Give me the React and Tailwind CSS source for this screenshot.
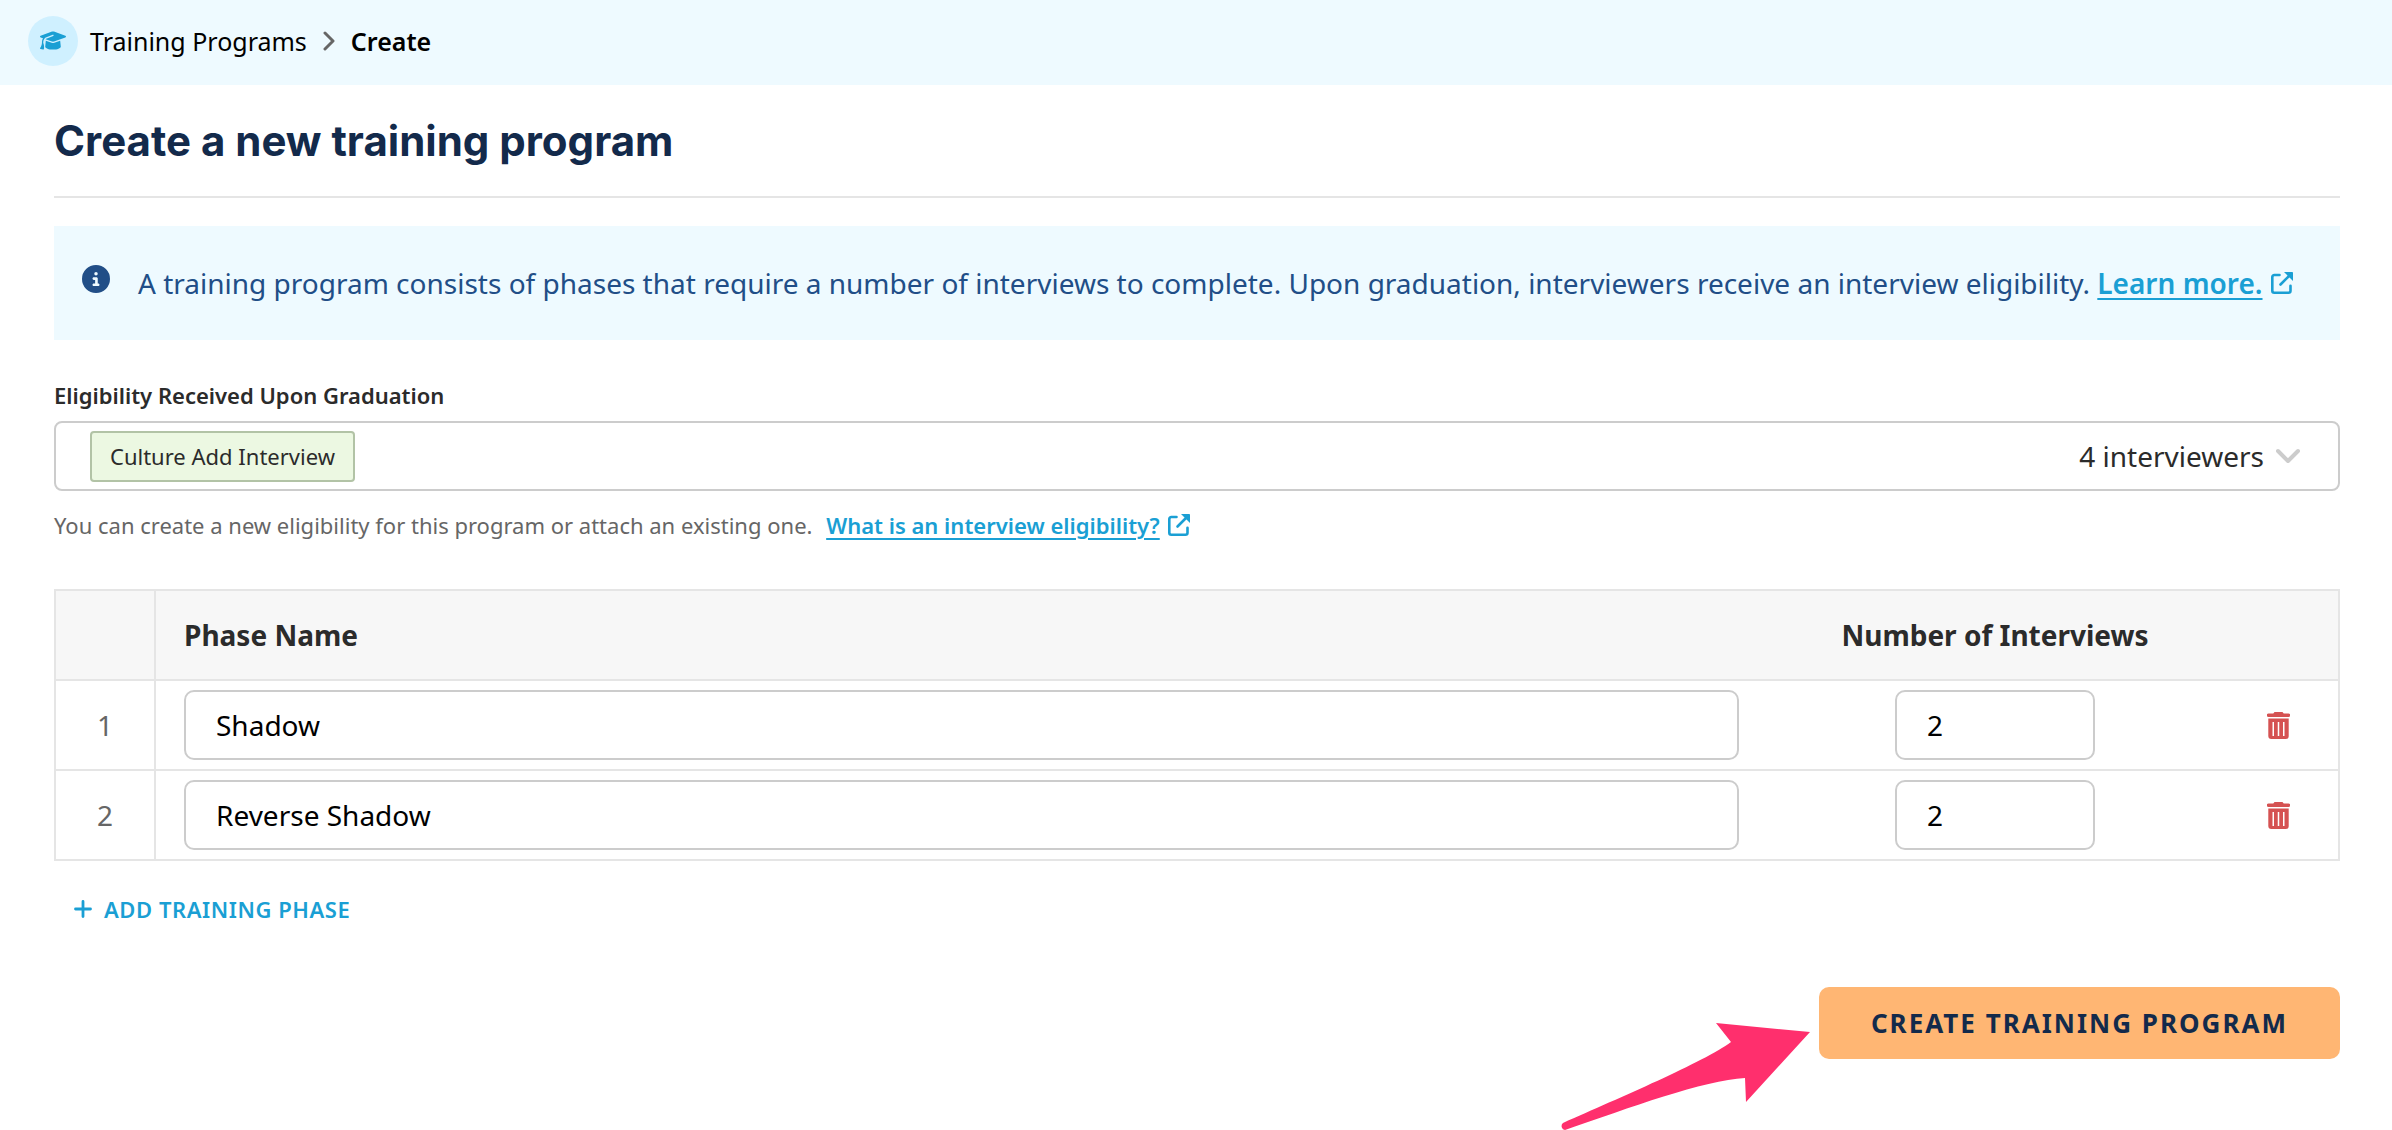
import React, { useState } from 'react';
import { FaGraduationCap, FaCircleInfo } from 'react-icons/fa6';

const initialPhases = [
  { id: 1, name: 'Shadow', interviews: 2 },
  { id: 2, name: 'Reverse Shadow', interviews: 2 },
];

function ExternalIcon() {
  return (
    <svg viewBox="0 0 22 22" className="w-[22px] h-[22px] shrink-0" fill="none" stroke="currentColor" strokeWidth="2.6" strokeLinecap="round">
      <path d="M8.500 3H3.300A2 2 0 0 0 1.300 5v13.700a2 2 0 0 0 2 2h14.200a2 2 0 0 0 2-2v-5" />
      <path d="M9.500 12.500L18 4" />
      <path d="M13 0h8.200a.8.8 0 0 1 .8.8V9z" fill="currentColor" stroke="none" />
    </svg>
  );
}

function TrashIcon() {
  return (
    <svg viewBox="0 0 23 27" className="w-[23px] h-[27px]" fill="currentColor">
      <path d="M7.500 0h8l1.200 1.600h4.800a1.500 1.500 0 0 1 0 3.400h-20a1.500 1.500 0 0 1 0-3.400h4.800z" />
      <path fillRule="evenodd" d="M1.300 6.500h20.400V24a3 3 0 0 1-3 3H4.300a3 3 0 0 1-3-3zM5.500 10v14H7V10zm5.250 0v14h1.500V10zM16 10v14h1.500V10z" />
    </svg>
  );
}

function App() {
  const [phases, setPhases] = useState(initialPhases);

  const updatePhase = (id, field, value) => {
    setPhases(phases.map((p) => (p.id === id ? { ...p, [field]: value } : p)));
  };

  const addPhase = () => {
    const nextId = Math.max(0, ...phases.map((p) => p.id)) + 1;
    setPhases([...phases, { id: nextId, name: '', interviews: 1 }]);
  };

  const removePhase = (id) => setPhases(phases.filter((p) => p.id !== id));

  return (
    <div className="min-h-screen bg-white font-['Noto_Sans','Open_Sans',sans-serif] text-[28px] leading-10 text-[#2b2b2b]">
      {/* Breadcrumb */}
      <nav className="flex items-center h-[85px] pb-1 px-7 bg-[#eefaff] text-[25px] text-black">
        <span className="flex items-center justify-center w-[50px] h-[50px] mr-3 rounded-full bg-[#cff0ff]">
          <FaGraduationCap className="w-[26px] h-[21px] text-[#1a9fd4]" />
        </span>
        <a href="#">Training Programs</a>
        <svg viewBox="0 0 12 20" className="w-3 h-5 mx-4" fill="none" stroke="#666" strokeWidth="3" strokeLinecap="round" strokeLinejoin="round">
          <path d="M2 2l8 8-8 8" />
        </svg>
        <span className="font-semibold">Create</span>
      </nav>

      <main className="pl-[54px] pr-[52px] pt-7">
        <h1 className="pb-7 border-b-2 border-[#e5e5e5] font-['Inter',sans-serif] text-[42px] leading-[55px] font-bold text-[#132a4b]">
          Create a new training program
        </h1>

        {/* Info banner */}
        <div className="flex items-center gap-7 mt-7 h-[114px] px-7 bg-[#eefaff] text-[#214e87]">
          <FaCircleInfo className="w-7 h-7 mb-2 shrink-0" />
          <p>
            A training program consists of phases that require a number of interviews to complete. Upon graduation, interviewers receive an interview eligibility.{' '}
            <a href="#" className="inline-flex items-center gap-2 font-semibold text-[#1a9fd4]">
              <span className="underline decoration-2 underline-offset-4">Learn more.</span>
              <ExternalIcon />
            </a>
          </p>
        </div>

        {/* Eligibility */}
        <div id="eligibility-label" className="mt-[35px] text-[22px] font-semibold">
          Eligibility Received Upon Graduation
        </div>
        <button
          type="button"
          aria-labelledby="eligibility-label"
          className="flex items-center w-full h-[70px] mt-1.5 pl-[34px] pr-[38px] border-2 border-[#ccc] rounded-lg"
        >
          <span className="flex items-center h-[51px] px-[18px] border-2 border-[#b2c3a6] rounded-sm bg-[#ecf8e2] text-[22px]">
            Culture Add Interview
          </span>
          <span className="ml-auto">4 interviewers</span>
          <svg viewBox="0 0 24 16" className="w-6 h-4 ml-3" fill="none" stroke="#ccc" strokeWidth="4" strokeLinecap="round" strokeLinejoin="round">
            <path d="M2 3l10 10L22 3" />
          </svg>
        </button>
        <p className="mt-3.5 text-[22px] text-[#666]">
          You can create a new eligibility for this program or attach an existing one.{' '}
          <a href="#" className="inline-flex items-center gap-2 ml-2 font-semibold text-[#1a9fd4]">
            <span className="underline decoration-2 underline-offset-4">What is an interview eligibility?</span>
            <ExternalIcon />
          </a>
        </p>

        {/* Phases */}
        <table className="w-full mt-11 border-collapse border-2 border-[#e5e5e5]">
          <thead>
            <tr className="h-[90px] bg-[#f7f7f7] border-b-2 border-[#e5e5e5]">
              <th className="w-[100px] border-r-2 border-[#e5e5e5]" />
              <th className="pl-7 text-left font-bold">Phase Name</th>
              <th className="w-[448px] font-bold">Number of Interviews</th>
              <th className="w-[120px]" />
            </tr>
          </thead>
          <tbody>
            {phases.map((phase, i) => (
              <tr key={phase.id} className="h-[90px] border-b-2 border-[#e5e5e5]">
                <td className="border-r-2 border-[#e5e5e5] text-center text-[#666]">{i + 1}</td>
                <td className="pl-7 pr-8">
                  <input
                    type="text"
                    aria-label="Phase Name"
                    value={phase.name}
                    onChange={(e) => updatePhase(phase.id, 'name', e.target.value)}
                    className="block w-full h-[70px] px-[30px] border-2 border-[#ccc] rounded-[10px] text-black"
                  />
                </td>
                <td>
                  <input
                    type="text"
                    inputMode="numeric"
                    aria-label="Number of Interviews"
                    value={phase.interviews}
                    onChange={(e) => updatePhase(phase.id, 'interviews', e.target.value)}
                    className="block w-[200px] h-[70px] mx-auto px-[30px] border-2 border-[#ccc] rounded-[10px] text-black"
                  />
                </td>
                <td>
                  <button type="button" aria-label="Delete phase" onClick={() => removePhase(phase.id)} className="block mx-auto text-[#d55252]">
                    <TrashIcon />
                  </button>
                </td>
              </tr>
            ))}
          </tbody>
        </table>

        <button type="button" onClick={addPhase} className="flex items-center gap-3 mt-7 ml-5 text-[22px] font-semibold tracking-wide text-[#1a9fd4]">
          <svg viewBox="0 0 18 18" className="w-[18px] h-[18px]" fill="none" stroke="currentColor" strokeWidth="2.8" strokeLinecap="round">
            <path d="M9 1.500v15M1.500 9h15" />
          </svg>
          ADD TRAINING PHASE
        </button>

        {/* Submit */}
        <div className="flex justify-end mt-[58px]">
          <div className="relative">
            <button type="submit" className="h-[72px] px-[52px] rounded-[10px] bg-[#ffb673] text-[26px] font-bold tracking-[2px] text-[#132a4b]">
              CREATE TRAINING PROGRAM
            </button>
            {/* Pointer arrow */}
            <svg viewBox="0 0 252 108" className="absolute right-full top-9 mr-2 w-[252px] h-[108px]" fill="#ff2f6d">
              <path d="M251 9L157 0L172 19C145 39 60 75 4 100A4 4 0 0 0 6 107C70 85 145 57 186 55L187 79Z" />
            </svg>
          </div>
        </div>
      </main>
    </div>
  );
}

export default App;
